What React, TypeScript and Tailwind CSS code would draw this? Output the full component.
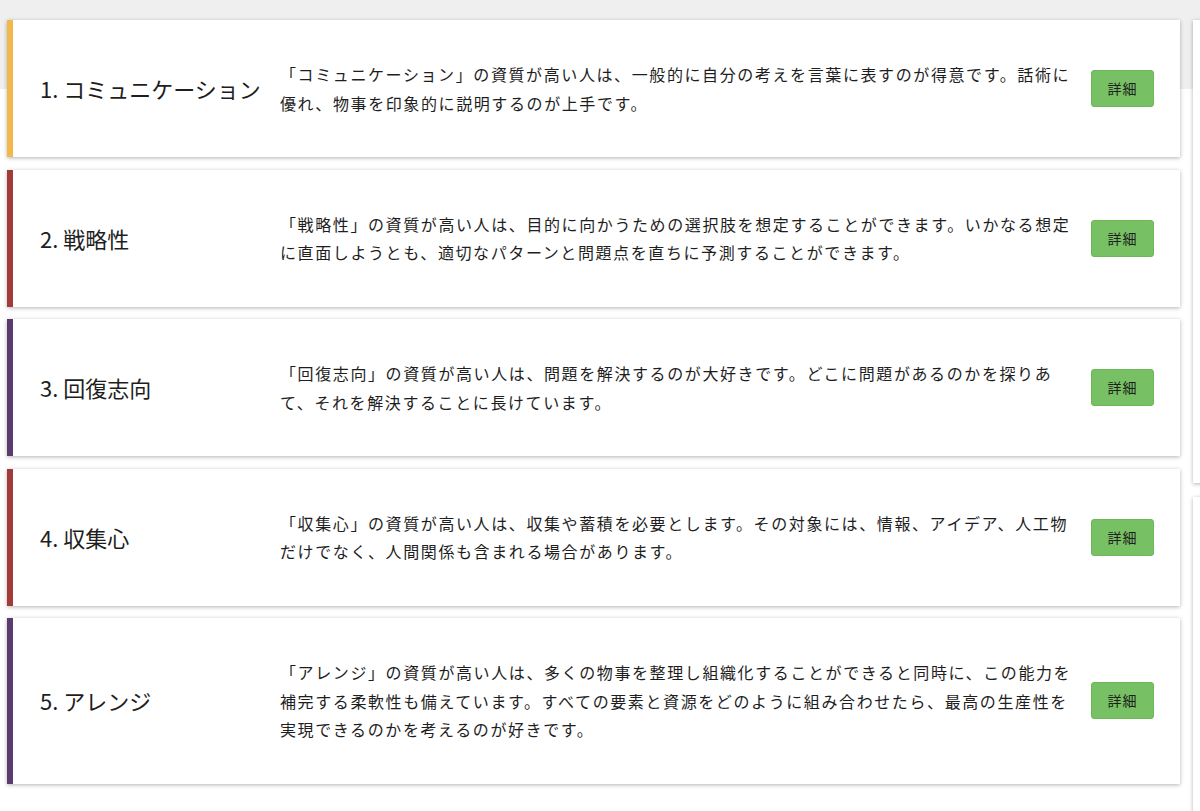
const STRENGTHS = [
  {
    rank: 1,
    name: "コミュニケーション",
    color: "border-l-[#f2b84b]",
    text: "「コミュニケーション」の資質が高い人は、一般的に自分の考えを言葉に表すのが得意です。話術に優れ、物事を印象的に説明するのが上手です。",
  },
  {
    rank: 2,
    name: "戦略性",
    color: "border-l-[#a33a3a]",
    text: "「戦略性」の資質が高い人は、目的に向かうための選択肢を想定することができます。いかなる想定に直面しようとも、適切なパターンと問題点を直ちに予測することができます。",
  },
  {
    rank: 3,
    name: "回復志向",
    color: "border-l-[#5b3a6e]",
    text: "「回復志向」の資質が高い人は、問題を解決するのが大好きです。どこに問題があるのかを探りあて、それを解決することに長けています。",
  },
  {
    rank: 4,
    name: "収集心",
    color: "border-l-[#a33a3a]",
    text: "「収集心」の資質が高い人は、収集や蓄積を必要とします。その対象には、情報、アイデア、人工物だけでなく、人間関係も含まれる場合があります。",
  },
  {
    rank: 5,
    name: "アレンジ",
    color: "border-l-[#5b3a6e]",
    text: "「アレンジ」の資質が高い人は、多くの物事を整理し組織化することができると同時に、この能力を補完する柔軟性も備えています。すべての要素と資源をどのように組み合わせたら、最高の生産性を実現できるのかを考えるのが好きです。",
  },
];

const FONT = "font-['Hiragino_Kaku_Gothic_ProN','Noto_Sans_CJK_JP',sans-serif]";

export default function App() {
  return (
    <div
      className={`w-[1200px] h-[811px] overflow-hidden bg-[linear-gradient(#efefef_0,#efefef_89px,#ffffff_89px)] text-[#1e1e1e] ${FONT}`}
    >
      <div className="flex gap-[13px] pl-[7px] pt-[20px]">
        <div className="flex flex-col gap-[12.5px] w-[1173px] shrink-0">
          {STRENGTHS.map((s) => (
            <div
              key={s.rank}
              className={`flex items-center bg-white border-l-[6px] ${s.color} shadow-[0_1px_4px_rgba(0,0,0,0.3)] pl-[27px] pr-[26px] py-[40px]`}
            >
              <div className="w-[240px] shrink-0 text-[22px] leading-[29px]">
                {s.rank}. {s.name}
              </div>
              <p className="w-[800px] shrink-0 text-[16px] leading-[28.5px] tracking-[1.6px]">
                {s.text}
              </p>
              <button className="ml-[11px] w-[63px] h-[37px] shrink-0 rounded-[3px] bg-[#77c063] border border-[#6cb858] text-[14px] tracking-[1px] text-[#1e1e1e]">
                詳細
              </button>
            </div>
          ))}
        </div>
        <div className="flex flex-col gap-[14px] w-[300px] shrink-0">
          <div className="h-[463px] bg-white shadow-[0_1px_4px_rgba(0,0,0,0.3)]" />
          <div className="h-[400px] bg-white shadow-[0_1px_4px_rgba(0,0,0,0.3)]" />
        </div>
      </div>
    </div>
  );
}
